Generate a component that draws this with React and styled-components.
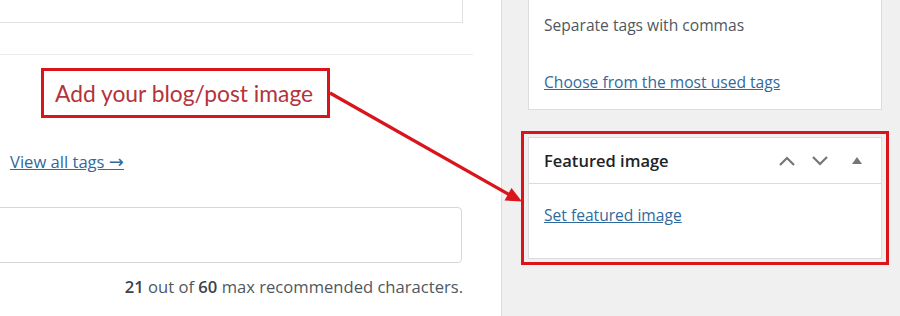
import React from 'react';
import styled, { createGlobalStyle } from 'styled-components';

const GlobalStyle = createGlobalStyle`
  html, body {
    margin: 0;
    padding: 0;
    background: #ffffff;
  }
  body {
    font-family: "Open Sans", "Noto Sans", sans-serif;
    color: #50575e;
  }
`;

const Page = styled.div`
  position: relative;
  display: flex;
  width: 900px;
  height: 316px;
  overflow: hidden;
`;

const Main = styled.div`
  display: flex;
  flex-direction: column;
  width: 501px;
  flex-shrink: 0;
  background: #ffffff;
`;

const TopBox = styled.div`
  width: 462px;
  height: 22px;
  border-right: 1px solid #e2e2e4;
  border-bottom: 1px solid #e2e2e4;
`;

const Separator = styled.div`
  width: 473px;
  height: 1px;
  margin-top: 31px;
  background: #ececee;
`;

const Callout = styled.div`
  box-sizing: border-box;
  width: 289px;
  height: 50px;
  margin: 13px 0 0 41px;
  border: 3px solid #d9141b;
  display: flex;
  align-items: center;
  padding-left: 11px;
  font-family: Lato, "Liberation Sans", sans-serif;
  font-size: 22.8px;
  color: #b3343c;
`;

const Link = styled.a`
  color: #2f6a9e;
  text-decoration: underline;
  font-size: 15.6px;
  cursor: pointer;
`;

const TagsLink = styled(Link)`
  margin: 34px 0 0 10px;
  line-height: 20px;
  font-size: 16.6px;
`;

const Arrow = styled.span`
  font-family: "DejaVu Sans", sans-serif;
  font-size: 18px;
`;

const TextInput = styled.div`
  box-sizing: border-box;
  width: 472px;
  height: 56px;
  margin: 35px 0 0 -10px;
  border: 1px solid #d7d7d9;
  border-radius: 4px;
`;

const Counter = styled.div`
  width: 463px;
  margin-top: 14px;
  text-align: right;
  font-size: 16.6px;
  line-height: 20px;
  color: #50575e;

  b {
    font-weight: 600;
    color: #3c434a;
  }
`;

const Sidebar = styled.div`
  flex: 1;
  display: flex;
  flex-direction: column;
  border-left: 1px solid #dcdcde;
  background: #f0f0f1;
  padding-left: 26px;
`;

const Panel = styled.div`
  box-sizing: border-box;
  width: 354px;
  background: #ffffff;
  border: 1px solid #dcdcde;
`;

const TagsPanel = styled(Panel)`
  height: 111px;
  margin-top: -1px;
  padding: 14px 0 0 15px;
  display: flex;
  flex-direction: column;
`;

const Hint = styled.p`
  margin: 0;
  font-size: 15.6px;
  line-height: 22px;
  color: #50575e;
`;

const MostUsed = styled(Link)`
  margin-top: 35px;
  line-height: 22px;
`;

const Highlight = styled.div`
  box-sizing: border-box;
  width: 368px;
  margin: 21px 0 0 -7px;
  border: 3px solid #d9141b;
  padding: 3px 4px;
`;

const PanelHeader = styled.div`
  display: flex;
  align-items: center;
  height: 45px;
  padding: 0 4px 0 15px;
  border-bottom: 1px solid #dcdcde;
`;

const PanelTitle = styled.h2`
  flex: 1;
  margin: 0;
  font-size: 16.5px;
  font-weight: 600;
  color: #1d2327;
`;

const IconButton = styled.span`
  display: flex;
  align-items: center;
  justify-content: center;
  width: ${(p) => p.$w}px;
  height: 24px;
`;

const PanelBody = styled.div`
  height: 74px;
  padding: 20px 15px 0;
  box-sizing: border-box;
`;

const Overlay = styled.svg`
  position: absolute;
  left: 0;
  top: 0;
  pointer-events: none;
`;

const Chevron = ({ up }) => (
  <svg width="18" height="12" viewBox="0 0 18 12">
    <path
      d={up ? 'M2 10 L9 3 L16 10' : 'M2 2 L9 9 L16 2'}
      fill="none"
      stroke="#72777c"
      strokeWidth="2.2"
    />
  </svg>
);

const Caret = () => (
  <svg width="10" height="8" viewBox="0 0 10 8">
    <path d="M5 0 L10 7 L0 7 Z" fill="#72777c" />
  </svg>
);

export default function App() {
  return (
    <>
      <GlobalStyle />
      <Page>
        <Main>
          <TopBox />
          <Separator />
          <Callout>Add your blog/post image</Callout>
          <TagsLink>View all tags <Arrow>→</Arrow></TagsLink>
          <TextInput />
          <Counter>
            <b>21</b> out of <b>60</b> max recommended characters.
          </Counter>
        </Main>
        <Sidebar>
          <TagsPanel>
            <Hint>Separate tags with commas</Hint>
            <MostUsed>Choose from the most used tags</MostUsed>
          </TagsPanel>
          <Highlight>
            <Panel>
              <PanelHeader>
                <PanelTitle>Featured image</PanelTitle>
                <IconButton $w={32}><Chevron up /></IconButton>
                <IconButton $w={34}><Chevron /></IconButton>
                <IconButton $w={40}><Caret /></IconButton>
              </PanelHeader>
              <PanelBody>
                <Link>Set featured image</Link>
              </PanelBody>
            </Panel>
          </Highlight>
        </Sidebar>
        <Overlay width="900" height="316" viewBox="0 0 900 316">
          <line x1="330" y1="93" x2="510" y2="195" stroke="#d9141b" strokeWidth="3.2" />
          <polygon points="522,201.5 504.5,200.5 511.5,188" fill="#d9141b" />
        </Overlay>
      </Page>
    </>
  );
}
